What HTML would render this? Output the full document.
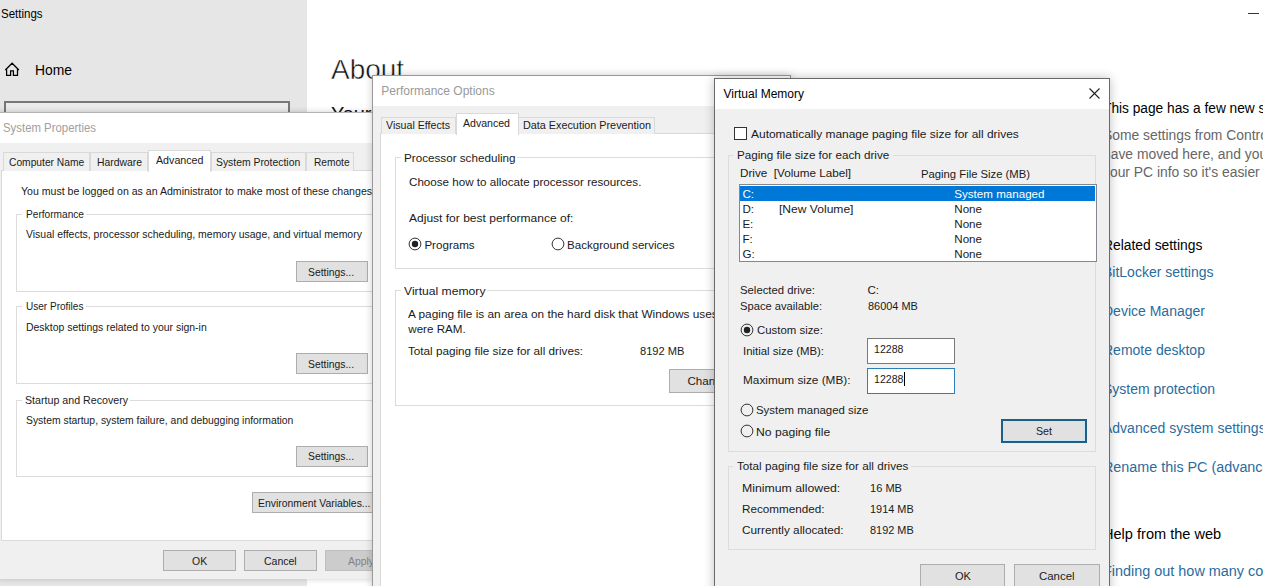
<!DOCTYPE html>
<html><head><meta charset="utf-8"><style>
html,body{margin:0;padding:0;width:1263px;height:586px;overflow:hidden;background:#fff;position:relative}
body>*{position:absolute}
.t{position:absolute;white-space:nowrap;line-height:1;font-family:"Liberation Sans", sans-serif;transform-origin:0 0}
</style></head><body>
<div style="left:0px;top:0px;width:307px;height:586px;background:#e6e6e6"></div>
<div style="left:307px;top:0px;width:956px;height:586px;background:#fff"></div>
<span class="t" style="left:0.9px;top:7.94px;font-size:12px;color:#000;transform:scaleX(0.9594);">Settings</span>
<svg style="left:0px;top:55px" width="30" height="30" viewBox="0 55 30 30"><path d="M5.3 70 L12.1 63.2 L18.9 70 M6.6 68.8 V75.3 H10.6 V70.8 H13.4 V75.3 H17.5 V68.8" fill="none" stroke="#000" stroke-width="1.25" stroke-linejoin="miter"/></svg>
<span class="t" style="left:35px;top:63.15px;font-size:14px;color:#000;transform:scaleX(0.9907);">Home</span>
<div style="left:4px;top:101px;width:286px;height:30px;border:2px solid #777;box-sizing:border-box;background:#ebebeb"></div>
<span class="t" style="left:331px;top:56.30px;font-size:28px;color:#111;transform:scaleX(0.9976);-webkit-text-stroke:0.5px #fff;">About</span>
<span class="t" style="left:331px;top:104.07px;font-size:20px;color:#111;">Your PC</span>
<div style="left:1248px;top:13px;width:11px;height:1px;background:#333"></div>
<span class="t" style="left:1103px;top:101.15px;font-size:14px;color:#000;transform:scaleX(0.9800);">This page has a few new settings</span>
<span class="t" style="left:1103px;top:128.15px;font-size:14px;color:#666;transform:scaleX(0.9900);">Some settings from Control Panel</span>
<span class="t" style="left:1103px;top:146.75px;font-size:14px;color:#666;transform:scaleX(0.9900);">have moved here, and you can copy</span>
<span class="t" style="left:1103px;top:164.65px;font-size:14px;color:#666;transform:scaleX(0.9900);">your PC info so it's easier to share.</span>
<span class="t" style="left:1103px;top:238.15px;font-size:14px;color:#000;transform:scaleX(0.9901);">Related settings</span>
<span class="t" style="left:1103px;top:264.55px;font-size:14px;color:#2a6c9e;">BitLocker settings</span>
<span class="t" style="left:1103px;top:303.55px;font-size:14px;color:#2a6c9e;">Device Manager</span>
<span class="t" style="left:1103px;top:342.55px;font-size:14px;color:#2a6c9e;">Remote desktop</span>
<span class="t" style="left:1103px;top:381.55px;font-size:14px;color:#2a6c9e;">System protection</span>
<span class="t" style="left:1103px;top:420.55px;font-size:14px;color:#2a6c9e;">Advanced system settings</span>
<span class="t" style="left:1103px;top:459.55px;font-size:14px;color:#2a6c9e;transform:scaleX(1.0250);">Rename this PC (advanced)</span>
<span class="t" style="left:1103px;top:527.15px;font-size:14px;color:#000;transform:scaleX(1.0400);">Help from the web</span>
<span class="t" style="left:1103px;top:564.15px;font-size:14px;color:#2a6c9e;transform:scaleX(1.0300);">Finding out how many cores my processor has</span>
<div style="left:-2px;top:112px;width:375px;height:467px;background:#f0f0f0;border-top:1px solid #b5b5b5;box-sizing:border-box;box-shadow:0 0 6px rgba(0,0,0,.2)"></div>
<div style="left:0px;top:113px;width:372px;height:30px;background:#fff"></div>
<span class="t" style="left:3.4px;top:121.94px;font-size:12px;color:#a0a0a0;transform:scaleX(0.9486);">System Properties</span>
<div style="left:1px;top:170px;width:380px;height:371px;background:#fff;border:1px solid #d9d9d9;box-sizing:border-box"></div>
<div style="left:3px;top:152px;width:87px;height:19px;background:#f0f0f0;border:1px solid #d9d9d9;border-bottom:none;box-sizing:border-box"></div>
<span class="t" style="left:8.7px;top:156.89px;font-size:11px;color:#1a1a1a;transform:scaleX(0.9319);">Computer Name</span>
<div style="left:90px;top:152px;width:58px;height:19px;background:#f0f0f0;border:1px solid #d9d9d9;border-bottom:none;box-sizing:border-box"></div>
<span class="t" style="left:97.1px;top:156.89px;font-size:11px;color:#1a1a1a;transform:scaleX(0.9458);">Hardware</span>
<div style="left:211px;top:152px;width:95px;height:19px;background:#f0f0f0;border:1px solid #d9d9d9;border-bottom:none;box-sizing:border-box"></div>
<span class="t" style="left:216px;top:156.89px;font-size:11px;color:#1a1a1a;transform:scaleX(0.9433);">System Protection</span>
<div style="left:306px;top:152px;width:48px;height:19px;background:#f0f0f0;border:1px solid #d9d9d9;border-bottom:none;box-sizing:border-box"></div>
<span class="t" style="left:313.5px;top:156.89px;font-size:11px;color:#1a1a1a;transform:scaleX(0.9243);">Remote</span>
<div style="left:148px;top:150px;width:63px;height:22px;background:#fff;border:1px solid #d9d9d9;border-bottom:none;box-sizing:border-box"></div>
<span class="t" style="left:155.5px;top:155.09px;font-size:11px;color:#1a1a1a;transform:scaleX(0.9708);">Advanced</span>
<span class="t" style="left:20.6px;top:186.29px;font-size:11px;color:#1a1a1a;transform:scaleX(0.9611);">You must be logged on as an Administrator to make most of these changes.</span>
<div style="left:16px;top:214px;width:400px;height:78px;border:1px solid #dcdcdc;box-sizing:border-box"></div>
<div style="left:22px;top:210px;width:64px;height:10px;background:#fff"></div>
<span class="t" style="left:25.6px;top:209.29px;font-size:11px;color:#1a1a1a;transform:scaleX(0.9210);">Performance</span>
<span class="t" style="left:26.3px;top:228.69px;font-size:11px;color:#1a1a1a;transform:scaleX(0.9499);">Visual effects, processor scheduling, memory usage, and virtual memory</span>
<div style="left:16px;top:306px;width:400px;height:78px;border:1px solid #dcdcdc;box-sizing:border-box"></div>
<div style="left:22px;top:302px;width:64px;height:10px;background:#fff"></div>
<span class="t" style="left:25.6px;top:301.39px;font-size:11px;color:#1a1a1a;transform:scaleX(0.9117);">User Profiles</span>
<span class="t" style="left:26.3px;top:321.89px;font-size:11px;color:#1a1a1a;transform:scaleX(0.9503);">Desktop settings related to your sign-in</span>
<div style="left:16px;top:400px;width:400px;height:77px;border:1px solid #dcdcdc;box-sizing:border-box"></div>
<div style="left:22px;top:396px;width:108px;height:10px;background:#fff"></div>
<span class="t" style="left:25.3px;top:394.59px;font-size:11px;color:#1a1a1a;transform:scaleX(0.9681);">Startup and Recovery</span>
<span class="t" style="left:26.4px;top:414.69px;font-size:11px;color:#1a1a1a;transform:scaleX(0.9425);">System startup, system failure, and debugging information</span>
<div style="left:296px;top:261px;width:72px;height:21px;background:#e1e1e1;border:1px solid #adadad;box-sizing:border-box"></div>
<span class="t" style="left:308px;top:266.69px;font-size:11px;color:#1a1a1a;transform:scaleX(0.9404);">Settings...</span>
<div style="left:296px;top:353px;width:72px;height:21px;background:#e1e1e1;border:1px solid #adadad;box-sizing:border-box"></div>
<span class="t" style="left:308px;top:359.09px;font-size:11px;color:#1a1a1a;transform:scaleX(0.9404);">Settings...</span>
<div style="left:296px;top:446px;width:72px;height:21px;background:#e1e1e1;border:1px solid #adadad;box-sizing:border-box"></div>
<span class="t" style="left:308.3px;top:451.49px;font-size:11px;color:#1a1a1a;transform:scaleX(0.9404);">Settings...</span>
<div style="left:252px;top:492px;width:140px;height:21px;background:#e1e1e1;border:1px solid #adadad;box-sizing:border-box"></div>
<span class="t" style="left:258.3px;top:497.89px;font-size:11px;color:#1a1a1a;transform:scaleX(0.9452);">Environment Variables...</span>
<div style="left:163px;top:550px;width:73px;height:21px;background:#e1e1e1;border:1px solid #adadad;box-sizing:border-box"></div>
<span class="t" style="left:191.6px;top:555.89px;font-size:11px;color:#1a1a1a;transform:scaleX(0.9501);">OK</span>
<div style="left:244px;top:550px;width:73px;height:21px;background:#e1e1e1;border:1px solid #adadad;box-sizing:border-box"></div>
<span class="t" style="left:263.6px;top:555.89px;font-size:11px;color:#1a1a1a;transform:scaleX(0.9550);">Cancel</span>
<div style="left:325px;top:550px;width:73px;height:21px;background:#cccccc;border:1px solid #bfbfbf;box-sizing:border-box"></div>
<span class="t" style="left:348px;top:555.89px;font-size:11px;color:#838383;transform:scaleX(0.9449);">Apply</span>
<div style="left:372px;top:75px;width:419px;height:521px;background:#f0f0f0;border:1px solid #999;box-sizing:border-box;box-shadow:0 0 8px rgba(0,0,0,.2)"></div>
<div style="left:373px;top:76px;width:417px;height:30px;background:#fff"></div>
<span class="t" style="left:381.3px;top:85.14px;font-size:12px;color:#999;">Performance Options</span>
<div style="left:380px;top:133px;width:420px;height:460px;background:#fff;border:1px solid #d9d9d9;box-sizing:border-box"></div>
<div style="left:381px;top:117px;width:75px;height:17px;background:#f0f0f0;border:1px solid #d9d9d9;border-bottom:none;box-sizing:border-box"></div>
<span class="t" style="left:386.3px;top:119.69px;font-size:11px;color:#1a1a1a;transform:scaleX(0.9661);">Visual Effects</span>
<div style="left:518px;top:117px;width:137px;height:17px;background:#f0f0f0;border:1px solid #d9d9d9;border-bottom:none;box-sizing:border-box"></div>
<span class="t" style="left:522.5px;top:119.69px;font-size:11px;color:#1a1a1a;transform:scaleX(0.9827);">Data Execution Prevention</span>
<div style="left:455.6px;top:113px;width:63px;height:21.5px;background:#fff;border:1px solid #d9d9d9;border-bottom:none;box-sizing:border-box"></div>
<span class="t" style="left:463px;top:117.69px;font-size:11px;color:#1a1a1a;transform:scaleX(0.9606);">Advanced</span>
<div style="left:395px;top:157px;width:400px;height:112px;border:1px solid #dcdcdc;box-sizing:border-box"></div>
<div style="left:401px;top:152px;width:116px;height:10px;background:#fff"></div>
<span class="t" style="left:404.4px;top:152.38px;font-size:11.6px;color:#1a1a1a;transform:scaleX(1.0063);">Processor scheduling</span>
<span class="t" style="left:408.8px;top:175.68px;font-size:11.6px;color:#1a1a1a;transform:scaleX(1.0016);">Choose how to allocate processor resources.</span>
<span class="t" style="left:408.8px;top:212.18px;font-size:11.6px;color:#1a1a1a;transform:scaleX(1.0371);">Adjust for best performance of:</span>
<svg style="left:407.5px;top:237.29999999999998px" width="14" height="14" viewBox="0 0 14 14"><circle cx="7" cy="7" r="5.9" fill="#fff" stroke="#333" stroke-width="1"/><circle cx="7" cy="7" r="3.2" fill="#222"/></svg>
<span class="t" style="left:424.4px;top:238.78px;font-size:11.6px;color:#1a1a1a;">Programs</span>
<svg style="left:550.5px;top:237.29999999999998px" width="14" height="14" viewBox="0 0 14 14"><circle cx="7" cy="7" r="5.9" fill="#fff" stroke="#333" stroke-width="1"/></svg>
<span class="t" style="left:567px;top:238.78px;font-size:11.6px;color:#1a1a1a;">Background services</span>
<div style="left:395px;top:290px;width:400px;height:116px;border:1px solid #dcdcdc;box-sizing:border-box"></div>
<div style="left:401px;top:285px;width:86px;height:10px;background:#fff"></div>
<span class="t" style="left:404.4px;top:285.48px;font-size:11.6px;color:#1a1a1a;transform:scaleX(1.0477);">Virtual memory</span>
<span class="t" style="left:408.3px;top:308.48px;font-size:11.6px;color:#1a1a1a;transform:scaleX(1.0200);">A paging file is an area on the hard disk that Windows uses as if it</span>
<span class="t" style="left:408.3px;top:322.88px;font-size:11.6px;color:#1a1a1a;">were RAM.</span>
<span class="t" style="left:408.3px;top:345.18px;font-size:11.6px;color:#1a1a1a;transform:scaleX(1.0096);">Total paging file size for all drives:</span>
<span class="t" style="left:640px;top:345.18px;font-size:11.6px;color:#1a1a1a;transform:scaleX(0.9584);">8192 MB</span>
<div style="left:669px;top:369px;width:80px;height:24px;background:#e1e1e1;border:1px solid #adadad;box-sizing:border-box"></div>
<span class="t" style="left:687.4px;top:375.18px;font-size:11.6px;color:#1a1a1a;">Change...</span>
<div style="left:714px;top:78px;width:396px;height:520px;background:#f0f0f0;border:1px solid #6a6a6a;box-sizing:border-box;box-shadow:0 0 10px rgba(0,0,0,.25)"></div>
<div style="left:715px;top:79px;width:394px;height:30px;background:#fff"></div>
<span class="t" style="left:723.5px;top:87.74px;font-size:12px;color:#000;">Virtual Memory</span>
<svg style="left:1088.5px;top:87.5px" width="11" height="11" viewBox="0 0 11 11"><path d="M0.5 0.5 L10.5 10.5 M10.5 0.5 L0.5 10.5" stroke="#222" stroke-width="1.1"/></svg>
<div style="left:734px;top:127px;width:13px;height:13px;background:#fff;border:1px solid #333;box-sizing:border-box"></div>
<span class="t" style="left:750.9px;top:128.18px;font-size:11.6px;color:#1a1a1a;transform:scaleX(1.0314);">Automatically manage paging file size for all drives</span>
<div style="left:728px;top:155px;width:368px;height:297px;border:1px solid #dcdcdc;box-sizing:border-box"></div>
<div style="left:733px;top:150px;width:160px;height:10px;background:#f0f0f0"></div>
<span class="t" style="left:736.7px;top:149.28px;font-size:11.6px;color:#1a1a1a;transform:scaleX(1.0051);">Paging file size for each drive</span>
<span class="t" style="left:740.4px;top:166.98px;font-size:11.6px;color:#1a1a1a;transform:scaleX(1.0076);">Drive&nbsp;&nbsp;[Volume Label]</span>
<span class="t" style="left:920.6px;top:167.88px;font-size:11.6px;color:#1a1a1a;transform:scaleX(0.9726);">Paging File Size (MB)</span>
<div style="left:738.5px;top:184px;width:358px;height:78px;background:#fff;border:1px solid #828790;box-sizing:border-box"></div>
<div style="left:740px;top:186px;width:354.5px;height:14.5px;background:#0078d7"></div>
<span class="t" style="left:742.4px;top:187.58px;font-size:11.6px;color:#fff;">C:</span>
<span class="t" style="left:954.3px;top:187.58px;font-size:11.6px;color:#fff;">System managed</span>
<span class="t" style="left:742.4px;top:202.58px;font-size:11.6px;color:#1a1a1a;">D:</span>
<span class="t" style="left:778.9px;top:202.58px;font-size:11.6px;color:#1a1a1a;transform:scaleX(1.0410);">[New Volume]</span>
<span class="t" style="left:954.3px;top:202.58px;font-size:11.6px;color:#1a1a1a;">None</span>
<span class="t" style="left:742.4px;top:217.58px;font-size:11.6px;color:#1a1a1a;">E:</span>
<span class="t" style="left:954.3px;top:217.58px;font-size:11.6px;color:#1a1a1a;">None</span>
<span class="t" style="left:742.4px;top:232.58px;font-size:11.6px;color:#1a1a1a;">F:</span>
<span class="t" style="left:954.3px;top:232.58px;font-size:11.6px;color:#1a1a1a;">None</span>
<span class="t" style="left:742.4px;top:247.58px;font-size:11.6px;color:#1a1a1a;">G:</span>
<span class="t" style="left:954.3px;top:247.58px;font-size:11.6px;color:#1a1a1a;">None</span>
<span class="t" style="left:740.4px;top:284.18px;font-size:11.6px;color:#1a1a1a;transform:scaleX(0.9774);">Selected drive:</span>
<span class="t" style="left:867.5px;top:284.18px;font-size:11.6px;color:#1a1a1a;">C:</span>
<span class="t" style="left:740.4px;top:300.18px;font-size:11.6px;color:#1a1a1a;transform:scaleX(0.9644);">Space available:</span>
<span class="t" style="left:867.5px;top:300.18px;font-size:11.6px;color:#1a1a1a;transform:scaleX(0.9436);">86004 MB</span>
<svg style="left:739.6px;top:322.90000000000003px" width="14" height="14" viewBox="0 0 14 14"><circle cx="7" cy="7" r="5.9" fill="#f0f0f0" stroke="#333" stroke-width="1"/><circle cx="7" cy="7" r="3.2" fill="#222"/></svg>
<span class="t" style="left:756.6px;top:324.48px;font-size:11.6px;color:#1a1a1a;transform:scaleX(0.9830);">Custom size:</span>
<span class="t" style="left:743.3px;top:344.88px;font-size:11.6px;color:#1a1a1a;transform:scaleX(0.9818);">Initial size (MB):</span>
<div style="left:867px;top:338px;width:88px;height:26px;background:#fff;border:1px solid #7a7a7a;box-sizing:border-box"></div>
<span class="t" style="left:873.5px;top:342.68px;font-size:11.6px;color:#1a1a1a;transform:scaleX(0.9145);">12288</span>
<span class="t" style="left:743.3px;top:374.38px;font-size:11.6px;color:#1a1a1a;transform:scaleX(1.0180);">Maximum size (MB):</span>
<div style="left:867px;top:368px;width:88px;height:26px;background:#fff;border:1px solid #2d7fb8;box-sizing:border-box"></div>
<span class="t" style="left:873.5px;top:372.88px;font-size:11.6px;color:#1a1a1a;transform:scaleX(0.9145);">12288</span>
<div style="left:903.5px;top:372px;width:1px;height:14px;background:#000"></div>
<svg style="left:739.6px;top:402.6px" width="14" height="14" viewBox="0 0 14 14"><circle cx="7" cy="7" r="5.9" fill="#f0f0f0" stroke="#333" stroke-width="1"/></svg>
<span class="t" style="left:756.3px;top:404.18px;font-size:11.6px;color:#1a1a1a;transform:scaleX(0.9858);">System managed size</span>
<svg style="left:739.6px;top:424.40000000000003px" width="14" height="14" viewBox="0 0 14 14"><circle cx="7" cy="7" r="5.9" fill="#f0f0f0" stroke="#333" stroke-width="1"/></svg>
<span class="t" style="left:756.3px;top:426.08px;font-size:11.6px;color:#1a1a1a;transform:scaleX(1.0474);">No paging file</span>
<div style="left:1001px;top:419px;width:86px;height:24px;background:#e1e1e1;border:2px solid #1f5f84;box-sizing:border-box"></div>
<span class="t" style="left:1036px;top:425.18px;font-size:11.6px;color:#1a1a1a;transform:scaleX(0.9189);">Set</span>
<div style="left:1003px;top:421px;width:82px;height:20px;border:1px solid #c9e6f7;box-sizing:border-box"></div>
<div style="left:728px;top:466px;width:368px;height:84px;border:1px solid #dcdcdc;box-sizing:border-box"></div>
<div style="left:733px;top:461px;width:178px;height:10px;background:#f0f0f0"></div>
<span class="t" style="left:737px;top:459.88px;font-size:11.6px;color:#1a1a1a;transform:scaleX(1.0069);">Total paging file size for all drives</span>
<span class="t" style="left:741.8px;top:481.78px;font-size:11.6px;color:#1a1a1a;transform:scaleX(1.0589);">Minimum allowed:</span>
<span class="t" style="left:869.6px;top:481.78px;font-size:11.6px;color:#1a1a1a;transform:scaleX(0.9545);">16 MB</span>
<span class="t" style="left:741.8px;top:503.08px;font-size:11.6px;color:#1a1a1a;transform:scaleX(1.0075);">Recommended:</span>
<span class="t" style="left:869.6px;top:503.08px;font-size:11.6px;color:#1a1a1a;transform:scaleX(0.9412);">1914 MB</span>
<span class="t" style="left:741.8px;top:524.08px;font-size:11.6px;color:#1a1a1a;transform:scaleX(1.0166);">Currently allocated:</span>
<span class="t" style="left:869.6px;top:524.08px;font-size:11.6px;color:#1a1a1a;transform:scaleX(0.9412);">8192 MB</span>
<div style="left:920px;top:564px;width:85px;height:24px;background:#e1e1e1;border:1px solid #adadad;box-sizing:border-box"></div>
<span class="t" style="left:954.6px;top:570.48px;font-size:11.6px;color:#1a1a1a;transform:scaleX(0.9546);">OK</span>
<div style="left:1014px;top:564px;width:86px;height:24px;background:#e1e1e1;border:1px solid #adadad;box-sizing:border-box"></div>
<span class="t" style="left:1039px;top:570.48px;font-size:11.6px;color:#1a1a1a;transform:scaleX(0.9859);">Cancel</span>
</body></html>
